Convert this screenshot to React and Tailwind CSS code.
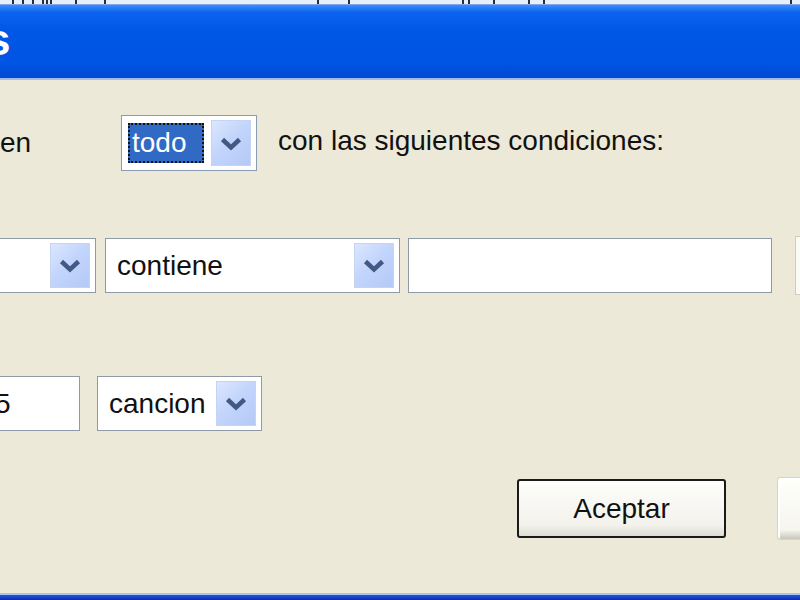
import React from "react";

function Chevron() {
  return (
    <svg width="24" height="15" viewBox="0 0 24 15" aria-hidden="true">
      <path d="M3.5 3.5 L12 11.5 L20.5 3.5" stroke="#435985" strokeWidth="4.5" fill="none" strokeLinejoin="miter" />
    </svg>
  );
}

function DropButton() {
  return (
    <div className="shrink-0 flex items-center justify-center self-stretch w-[40px] my-[4px] mr-[5px] border border-[#c4d4f7] bg-[linear-gradient(135deg,#dce7fe,#c3d5fb_45%,#b4c9f6)]">
      <Chevron />
    </div>
  );
}

function TopStrip() {
  const lines = [12, 22, 32, 42, 46, 50, 75, 104, 317, 348, 462, 468, 493, 528, 543, 790];
  return (
    <svg width="800" height="5" viewBox="0 0 800 5" className="block shrink-0">
      <rect x="0" y="0" width="800" height="5" fill="#e6eefa" />
      {lines.map((x) => (
        <rect key={x} x={x} y="0" width="2" height="5" fill="#2b2b3a" />
      ))}
      <rect x="0" y="4" width="800" height="1" fill="#7fa8ee" />
    </svg>
  );
}

export default function App() {
  return (
    <div className="w-[800px] h-[600px] overflow-hidden bg-[#ece9d8] flex flex-col font-['Liberation_Sans',Arial,sans-serif] text-[28px] text-[#111]">
      <TopStrip />
      <div className="h-[73px] shrink-0 flex items-center bg-[linear-gradient(to_bottom,#3c8df8_0%,#0d63ef_10%,#0057e6_35%,#0054e3_80%,#0048d4_100%)]">
        <span className="shrink-0 ml-[-14px] text-white font-bold text-[44px] leading-none mb-[4px]">s</span>
      </div>
      <div className="h-[2px] shrink-0 bg-[#9dbdf2]" />

      <div className="flex-1 flex flex-col">
        {/* Row 1 */}
        <div className="mt-[35px] h-[56px] flex items-center">
          <span className="shrink-0 w-[121px] leading-none">en</span>
          <div className="shrink-0 w-[136px] h-[56px] flex items-stretch border border-[#8a9bb3] bg-white">
            <div className="flex-1 flex items-center pl-[6px]">
              <div className="h-[40px] w-[76px] bg-[#316ac5] border-2 border-dotted border-[#111] flex items-center pl-[2px] text-white leading-none">
                todo
              </div>
            </div>
            <DropButton />
          </div>
          <span className="shrink-0 ml-[21px] leading-none mb-[4px] whitespace-nowrap">con las siguientes condiciones:</span>
        </div>

        {/* Row 2 */}
        <div className="mt-[67px] h-[55px] flex items-stretch">
          <div className="shrink-0 ml-[-44px] w-[140px] flex items-stretch border border-[#8f9aa8] bg-white">
            <div className="flex-1" />
            <DropButton />
          </div>
          <div className="shrink-0 ml-[9px] w-[295px] flex items-stretch border border-[#8f9aa8] bg-white">
            <div className="flex-1 flex items-center pl-[11px] leading-none">contiene</div>
            <DropButton />
          </div>
          <div className="shrink-0 ml-[8px] w-[364px] border border-[#8f9aa8] bg-white" />
          <div className="shrink-0 ml-[23px] w-[40px] my-[-2px] border border-[#cfcdbf] border-r-0 bg-[#fbfbf6]" />
        </div>

        {/* Row 3 */}
        <div className="mt-[83px] h-[55px] flex items-stretch">
          <div className="shrink-0 ml-[-17px] w-[97px] flex items-center pl-[11px] border border-[#8f9aa8] bg-white leading-none">
            5
          </div>
          <div className="shrink-0 ml-[17px] w-[165px] flex items-stretch border border-[#8f9aa8] bg-white">
            <div className="flex-1 flex items-center pl-[11px] leading-none">cancion</div>
            <DropButton />
          </div>
        </div>

        {/* Buttons */}
        <div className="mt-[48px] h-[59px] flex items-stretch">
          <div className="shrink-0 ml-[517px] w-[209px] border-2 border-[#1a1a1a] rounded-[3px] bg-[linear-gradient(to_bottom,#fdfdfb,#f3f2ec_80%,#dedcd2)] flex items-center justify-center leading-none">
            Aceptar
          </div>
          <div className="shrink-0 ml-[51px] w-[60px] my-[-2px] border border-[#d6d4c6] border-r-0 rounded-l-[3px] bg-[linear-gradient(to_bottom,#fffffb,#f6f5ee_85%,#c9c7bc)] shadow-[inset_2px_2px_0_#ffffff]" />
        </div>
      </div>

      <div className="h-[2px] shrink-0 bg-[#a9c3f0]" />
      <div className="h-[5px] shrink-0 bg-[linear-gradient(to_bottom,#2a55d8,#0a2bb0)]" />
    </div>
  );
}
